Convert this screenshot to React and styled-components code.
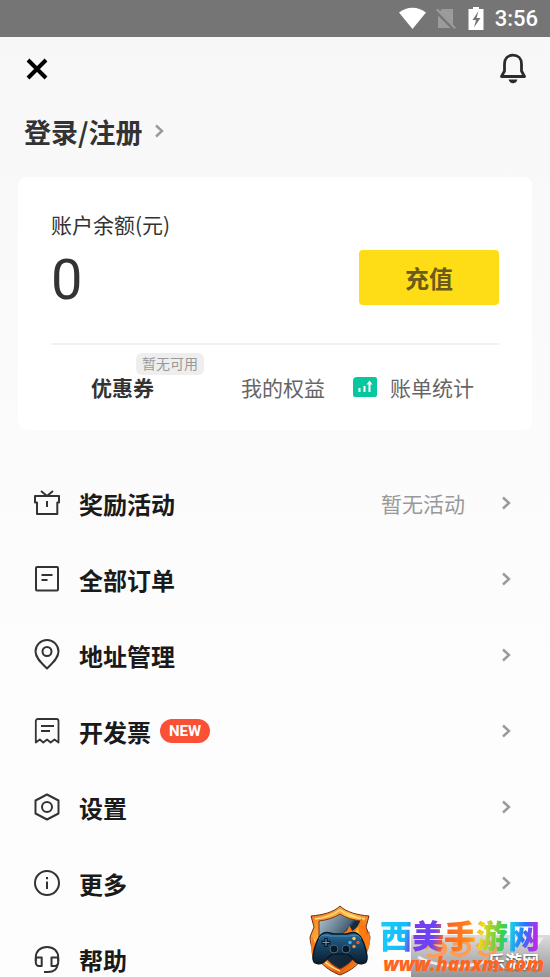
import React from 'react';
import styled, { createGlobalStyle } from 'styled-components';

const GlobalStyle = createGlobalStyle`
    * {
        box-sizing: border-box;
    }

    body {
        margin: 0;
        font-family: Roboto, "Noto Sans CJK SC", sans-serif;
        color: #333;
        background: #fafafa;
    }

    button {
        font-family: inherit;
        color: inherit;
        border: none;
        padding: 0;
        background: none;
        cursor: pointer;
    }

    a {
        color: inherit;
        text-decoration: none;
    }

    svg {
        display: block;
        flex: none;
    }
`;

const Page = styled.div`
    position: relative;
    height: 100vh;
    overflow: hidden;
    background: linear-gradient(#f7f7f7, #fdfdfd 70%);
`;

const StatusBar = styled.div`
    display: flex;
    align-items: center;
    justify-content: flex-end;
    height: 37px;
    padding: 0 12px;
    gap: 10px;
    background: #757575;
    color: #fff;
    font-size: 22px;
    font-weight: 500;
`;

const TopBar = styled.header`
    display: flex;
    align-items: center;
    justify-content: space-between;
    height: 64px;
    padding: 0 22px;
`;

const Login = styled.a`
    display: flex;
    align-items: center;
    gap: 13px;
    height: 60px;
    padding: 0 24px;
    font-size: 27px;
    font-weight: 700;
    font-family: "Noto Sans CJK SC", sans-serif;
`;

const Card = styled.section`
    margin: 16px 18px 0;
    padding: 31px 33px 27px;
    border-radius: 8px;
    background: #fff;
`;

const Label = styled.div`
    font-family: "Noto Sans CJK SC", sans-serif;
    font-size: 21px;
    line-height: 32px;
`;

const Balance = styled.div`
    display: flex;
    align-items: flex-start;
    justify-content: space-between;
    height: 105px;
    padding-top: 10px;
    border-bottom: 2px solid #f1f1f1;
`;

const Amount = styled.div`
    font-size: 56px;
    line-height: 60px;
`;

const Recharge = styled.button`
    width: 140px;
    height: 55px;
    border-radius: 4px;
    && {
        background: #ffdd16;
        color: #6a5b1c;
    }
    font-size: 24px;
    font-weight: 700;
`;

const Tabs = styled.nav`
    display: flex;
    justify-content: space-between;
    padding: 26px 25px 0 40px;
`;

const TabGroup = styled.div`
    display: flex;
    gap: 28px;
`;

const Tab = styled.button`
    position: relative;
    display: flex;
    align-items: center;
    gap: 13px;
    height: 32px;
    font-size: 21px;
    && {
        color: ${({ active }) => (active ? '#333' : '#666')};
    }
    font-weight: ${({ active }) => (active ? 700 : 400)};
`;

const Hint = styled.span`
    position: absolute;
    left: 45px;
    bottom: 28px;
    padding: 0 6px;
    border-radius: 6px;
    background: #eee;
    color: #999;
    font-size: 14px;
    font-weight: 400;
    line-height: 22px;
    white-space: nowrap;
`;

const Menu = styled.nav`
    padding: 35px 39px 0 33px;
`;

const Row = styled.a`
    display: flex;
    align-items: center;
    height: 76px;
    color: #1a1a1a;
    font-size: 24px;
    font-weight: 700;
`;

const RowTitle = styled.span`
    margin-left: 18px;
`;

const RowNote = styled.span`
    margin: 0 37px 0 auto;
    color: #999;
    font-size: 21px;
    font-weight: 400;
`;

const NewTag = styled.span`
    margin-left: 9px;
    padding: 0 9px;
    border-radius: 12px;
    background: #fa5035;
    color: #fff;
    font-size: 15px;
    font-weight: 700;
    line-height: 24px;
`;

const Watermark = styled.div`
    position: absolute;
    right: 0;
    bottom: 0;
    display: flex;
    align-items: flex-end;
    gap: 8px;
`;

const Brand = styled.div`
    position: relative;
    width: 170px;
    height: 60px;
`;

const Plate = styled.div`
    position: absolute;
    right: 0;
    bottom: 0;
    width: 139px;
    height: 42px;
    background: linear-gradient(#dcdcdc, #959595);
`;

const PlateText = styled.span`
    position: absolute;
    right: 11px;
    bottom: 6px;
    color: #fff;
    font-size: 17px;
    font-weight: 700;
    line-height: 18px;
    text-shadow: 0 1px 2px #444;
`;

const BrandName = styled.div`
    position: absolute;
    left: 0;
    top: 0;
    font-size: 32px;
    font-weight: 900;
    line-height: 40px;
    white-space: nowrap;
    color: transparent;
    background: linear-gradient(100deg, #19cdf5 0, #12bdfa 17%, #7a3be8 21%, #6b45f5 34%, #ff5a26 40%, #ff8b18 56%, #f6d51a 62%, #3fcf4c 75%, #19c8ec 80%, #2a73fa 88%, #b42bea 95%);
    background-clip: text;
`;

const BrandUrl = styled.div`
    position: absolute;
    right: 6px;
    bottom: 0;
    color: #ff6420;
    font-family: "Open Sans", sans-serif;
    font-size: 19px;
    font-style: italic;
    font-weight: 800;
    line-height: 26px;
`;

const Icon = ({ children }) => (
    <svg width="28" height="32" viewBox="0 0 28 32" fill="none" stroke="#333" strokeWidth="2" strokeLinejoin="round" aria-hidden="true">
        {children}
    </svg>
);

const Chevron = ({ color = '#999' }) => (
    <svg width="9" height="14" viewBox="0 0 9 14" fill="none" stroke={color} strokeWidth="2.400" aria-hidden="true">
        <path d="M1 1.500 7 7l-6 5.500" />
    </svg>
);

const icons = {
    gift: (
        <>
            <path d="M2 9h24v6.500h-1.700V27H4V15.500H2z" />
            <path d="M14 14v6M8 4l6 5 6-5" />
        </>
    ),
    order: (
        <>
            <rect x="3" y="4" width="22" height="23.500" rx="1" />
            <path d="M8.500 12h11M8.500 17h6" />
        </>
    ),
    pin: (
        <>
            <path d="M14 29.500C9 24.500 2.500 19 2.500 12.500a11.500 11.500 0 0 1 23 0c0 6.500-6.500 12-11.500 17z" />
            <circle cx="14" cy="12.500" r="4.500" />
        </>
    ),
    invoice: (
        <>
            <path strokeWidth="1.800" d="M2.800 27.500V6a2 2 0 0 1 2-2h18.700a2 2 0 0 1 2 2v21.500l-4-3-3.800 3-3.700-3-3.700 3-3.500-3z" />
            <path strokeWidth="1.800" d="M8 11h13M8 16h9" />
        </>
    ),
    settings: (
        <>
            <path d="M14 3.500 25.500 9.500v13L14 28.500 2.500 22.500v-13z" />
            <circle cx="14" cy="16" r="5" />
        </>
    ),
    more: (
        <>
            <circle cx="14" cy="16" r="12" />
            <path d="M14 14.500v7.500M14 10v2.300" />
        </>
    ),
    help: (
        <>
            <path d="M2.800 18v-3.500C2.800 8 7.500 4 14 4s11.200 4 11.200 10.500V18" />
            <path d="M8.700 14.500v8.500H6a3.200 3.200 0 0 1-3.200-3.200V16a1.500 1.500 0 0 1 1.500-1.500zM18.500 14.500v8.500H22a3.200 3.200 0 0 0 3.200-3.200V16a1.500 1.500 0 0 0-1.500-1.500z" />
            <path d="M24.500 21c0 5-4 8-9.500 8h-4" />
        </>
    ),
};

const items = [
    { icon: 'gift', title: '奖励活动', note: '暂无活动' },
    { icon: 'order', title: '全部订单' },
    { icon: 'pin', title: '地址管理' },
    { icon: 'invoice', title: '开发票', isNew: true },
    { icon: 'settings', title: '设置' },
    { icon: 'more', title: '更多' },
    { icon: 'help', title: '帮助' },
];

const StatusIcons = () => (
    <svg width="86" height="24" viewBox="0 0 86 24" aria-hidden="true">
        <path fill="#fff" d="M0 5.500C8-1 19-1 27 5.500L13.500 22z" />
        <g fill="#9b9b9b">
            <path d="M43 2h11v17.500L40.500 5z" />
            <path d="M39 8.500 51.500 21H39z" />
            <path d="m37 3 1.500-1.500L57 20.500 55.500 22z" />
        </g>
        <path fill="#fff" d="M74 0h6v2h4.500v21h-15V2H74z" />
        <path fill="#757575" d="m79.500 4-6 9H77l-2 7.500 6.500-9.500h-4z" />
    </svg>
);

const Shield = () => (
    <svg width="64" height="72" viewBox="0 0 64 72" aria-hidden="true">
        <defs>
            <linearGradient id="rim" x1="0" y1="0" x2="1" y2="1">
                <stop offset="0" stopColor="#f36b16" />
                <stop offset=".4" stopColor="#ffc04a" />
                <stop offset=".7" stopColor="#e85c0c" />
                <stop offset="1" stopColor="#ffb02e" />
            </linearGradient>
            <linearGradient id="face" x1="0" y1="0" x2="1" y2="1">
                <stop offset="0" stopColor="#b8cbd8" />
                <stop offset=".45" stopColor="#4a6478" />
                <stop offset=".5" stopColor="#172c40" />
                <stop offset="1" stopColor="#10202f" />
            </linearGradient>
            <linearGradient id="pad" x1="0" y1="0" x2="0" y2="1">
                <stop offset="0" stopColor="#2c6d9c" />
                <stop offset=".5" stopColor="#16405f" />
                <stop offset="1" stopColor="#0b1c2d" />
            </linearGradient>
        </defs>
        <path fill="url(#rim)" stroke="#713013" d="M32 1c6 6 17 9 29 10l-3 11 4 10c-1 19-14 32-30 38C16 64 3 51 2 32l4-10-3-11C15 10 26 7 32 1z" />
        <path fill="none" stroke="#ffe08a" strokeWidth="1.500" d="M32 5c7 5 15 8 25 9M32 5c-7 5-15 8-25 9M6 34c2 15 11 26 26 32" />
        <path fill="url(#face)" stroke="#7a3510" d="M32 9c6 4 13 6 21 7v16c0 16-9 26-21 32C20 58 11 48 11 32V16c8-1 15-3 21-7z" />
        <path fill="#ff7a12" d="M33 32c3-7 6-3 8-11 3 3 3 5 3 5 7-4 7-8 10-14 0 9 6 9 4 18 4-2 4-5 4-5-1 9 2 11-3 23z" />
        <path fill="#ffc52e" d="M40 34c3-5 6-3 10-12 0 8 5 8 3 18z" />
        <path fill="#ff7a12" d="M3 31c4 2 2 7 7 9L5 52C1 44 5 39 3 31z" />
        <path fill="url(#pad)" stroke="#091826" strokeWidth="1.500" d="M16 28c4-2 7 1 10 1h12c3 0 6-3 10-1 6 2 10 15 11 23 1 9-8 10-13 4-3-4-5-6-9-6H27c-4 0-6 2-9 6-5 6-14 5-13-4 1-8 5-21 11-23z" />
        <path fill="none" stroke="#3c95c6" d="M11 34c2-5 6-4 11-3h20c5-1 9-2 11 3" />
        <path stroke="#081623" strokeWidth="3.500" d="M18 33v9M13.500 37.500h9" />
        <path stroke="#7e9caf" strokeWidth="1" d="M18 34v7M14.500 37.500h7" />
        <g fill="#0b1826" stroke="#456a81">
            <circle cx="26" cy="44" r="4" />
            <circle cx="38" cy="44" r="4" />
        </g>
        <circle cx="46" cy="33.500" r="1.700" fill="#ffd14a" />
        <circle cx="50" cy="37.500" r="1.700" fill="#ff4b38" />
        <circle cx="46" cy="41.500" r="1.700" fill="#ff8d28" />
        <circle cx="42" cy="37.500" r="1.700" fill="#3eb9e8" />
    </svg>
);

const App = () => (
    <>
        <GlobalStyle />
        <Page>
            <StatusBar>
                <StatusIcons />
                <span>3:56</span>
            </StatusBar>
            <TopBar>
                <button type="button" aria-label="关闭">
                    <svg width="30" height="30" viewBox="0 0 30 30" stroke="#000" strokeWidth="4">
                        <path d="m6 6 18 18M24 6 6 24" />
                    </svg>
                </button>
                <button type="button" aria-label="通知">
                    <svg width="30" height="32" viewBox="0 0 30 32" fill="none" stroke="#2b2b2b" strokeWidth="2.800" strokeLinejoin="round">
                        <path d="M6.500 18V11C6.500 5.500 10 2.200 15 2.200S23.500 5.500 23.500 11v7l3 5.500h-23z" />
                        <path fill="#2b2b2b" stroke="none" d="M10.500 26.500h9c-1 2.700-2.500 3.800-4.500 3.800s-3.500-1.100-4.500-3.800z" />
                    </svg>
                </button>
            </TopBar>
            <Login href="#login">
                登录/注册
                <Chevron />
            </Login>
            <Card>
                <Label>账户余额(元)</Label>
                <Balance>
                    <Amount>0</Amount>
                    <Recharge type="button">充值</Recharge>
                </Balance>
                <Tabs>
                    <Tab type="button" active={1}>
                        优惠券
                        <Hint>暂无可用</Hint>
                    </Tab>
                    <TabGroup>
                        <Tab type="button">我的权益</Tab>
                        <Tab type="button">
                            <svg width="24" height="20" viewBox="0 0 24 20" aria-hidden="true">
                                <path fill="#06c79d" d="M4 0h18a2 2 0 0 1 2 2v16a2 2 0 0 1-2 2H2a2 2 0 0 1-2-2V4a4 4 0 0 1 4-4z" />
                                <path stroke="#fff" strokeWidth="2" d="M6.500 15v-4M11.500 15V9M16.500 15V6" />
                                <path fill="#fff" d="m16.500 3.500 3 4h-6z" />
                            </svg>
                            账单统计
                        </Tab>
                    </TabGroup>
                </Tabs>
            </Card>
            <Menu>
                {items.map(({ icon, title, note, isNew }) => (
                    <Row key={icon} href={`#${icon}`}>
                        <Icon>{icons[icon]}</Icon>
                        <RowTitle>{title}</RowTitle>
                        {isNew && <NewTag>NEW</NewTag>}
                        <RowNote>{note}</RowNote>
                        <Chevron />
                    </Row>
                ))}
            </Menu>
            <Watermark>
                <Shield />
                <Brand>
                    <Plate>
                        <svg width="139" height="42" viewBox="0 0 139 42" fill="none" aria-hidden="true">
                            <path stroke="#ff9c55" strokeWidth="4" d="M14 14c6-8 18-8 20-2s-8 12-18 8M42 10c8-6 18-3 16 4s-14 8-18 2M66 12c8-7 18-5 18 2s-12 8-16 2" />
                            <path stroke="#ececec" strokeWidth="3" d="M7 22c18 10 48 12 68 4M98 4h32l-4 6" />
                        </svg>
                        <PlateText>乐游网</PlateText>
                    </Plate>
                    <BrandName>西美手游网</BrandName>
                    <BrandUrl>www.hanxm.com</BrandUrl>
                </Brand>
            </Watermark>
        </Page>
    </>
);

export default App;
